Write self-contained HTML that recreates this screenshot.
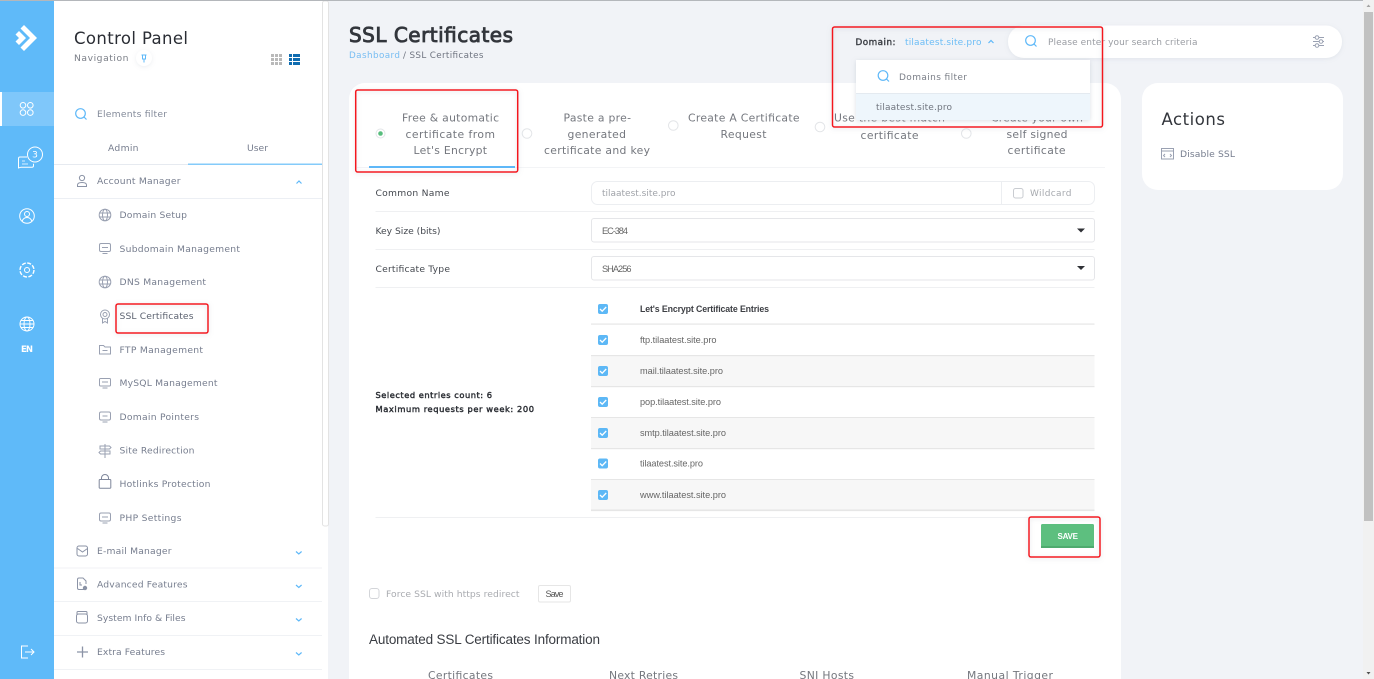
<!DOCTYPE html>
<html lang="en">
<head>
<meta charset="utf-8">
<title>SSL Certificates</title>
<style>
html,body{margin:0;padding:0;width:1374px;height:679px;overflow:hidden;background:#f1f3f7}
svg{display:block;position:absolute;left:0;top:0;filter:blur(.3px)}
text{font-family:"DejaVu Sans","Liberation Sans",sans-serif;white-space:pre}
.nav{font-size:9.2px;fill:#767d8e}
.sub{font-size:9.2px;fill:#767d8e}
.tab{font-size:10.8px;fill:#74777e}
.lab{font-size:9.2px;fill:#44484f}
.cell{font-family:"Liberation Sans",sans-serif;font-size:9.2px;fill:#666}
.semi{font-size:8.3px;fill:#2b2e34;stroke:#2b2e34;stroke-width:.42px}
.ic{fill:none;stroke:#9aa1b2;stroke-width:1}
.wh{fill:none;stroke:#fff;stroke-width:1}
.bl{fill:none;stroke:#5eb8f8;stroke-width:1.2}
.red{fill:none;stroke:#f4141e;stroke-width:1.5}
</style>
</head>
<body>
<svg width="1374" height="679" viewBox="0 0 1374 679" xmlns="http://www.w3.org/2000/svg">
<defs>
<filter id="sh" x="-20%" y="-20%" width="140%" height="140%"><feDropShadow dx="0" dy="1" stdDeviation="2.5" flood-color="#8a94a6" flood-opacity=".3"/></filter>
<filter id="sh2" x="-20%" y="-40%" width="140%" height="180%"><feDropShadow dx="0" dy="1" stdDeviation="2" flood-color="#8a94a6" flood-opacity=".16"/></filter>
</defs>

<!-- page -->
<rect width="1374" height="679" fill="#f1f3f7"/>

<!-- icon rail -->
<rect x="0" y="0" width="54" height="679" fill="#5fbaf9"/>
<rect x="0" y="92" width="54" height="34" fill="#7fc7fa"/>
<rect x="0" y="92" width="2" height="34" fill="#fff"/>
<g fill="#fff">
<path d="M24 25l13 13-13 13-3.500-3.500 9.500-9.500-9.500-9.500z"/>
<path d="M19 31l7 7-7 7-3.500-3.500 3.500-3.500-3.500-3.500z"/>
</g>
<g class="wh">
<circle cx="23" cy="105.300" r="2.800"/><circle cx="30.300" cy="105.300" r="2.800"/><circle cx="23" cy="112.600" r="2.800"/><circle cx="30.300" cy="112.600" r="2.800"/>
<path d="M27 157h-7a1.500 1.500 0 0 0-1.500 1.500v9.500l2.500-.8h11a1.500 1.500 0 0 0 1.500-1.500v-2"/>
<path d="M22 161h3M22 164h6" stroke-width=".8"/>
<circle cx="35" cy="154.500" r="7.500" fill="#5fbaf9"/>
<circle cx="27" cy="216" r="7.300"/><circle cx="27" cy="214" r="2.500"/><path d="M22 221.500c1-3 2.500-4 5-4s4 1 5 4"/>
<circle cx="27" cy="270" r="7" stroke-width="1.400" stroke-dasharray="4 1.500"/><circle cx="27" cy="270" r="2.500"/>
<circle cx="27" cy="324" r="7"/><ellipse cx="27" cy="324" rx="3" ry="7"/><path d="M20 324h14M21 320.500h12M21 327.500h12"/>
<path d="M28 646h-6.500v12H28M25 652h9M31 649l3 3-3 3"/>
</g>
<text x="35" y="157.500" font-size="9" fill="#fff" text-anchor="middle">3</text>
<text x="21" y="352" font-size="8.500" font-weight="bold" fill="#fff" textLength="12">EN</text>

<!-- sidebar -->
<rect x="54" y="0" width="274" height="679" fill="#fff"/>
<rect x="322.500" y="1" width="6" height="525" rx="2" fill="#fff" stroke="#e3e3e3" stroke-width="1"/>
<rect x="329" y="0" width="1020" height="679" fill="#f1f3f7"/>
<text x="74" y="44" font-size="16.500" fill="#2a2d34" textLength="114">Control Panel</text>
<text x="74" y="61" font-size="9.200" fill="#7b7f88" textLength="54.500">Navigation</text>
<circle cx="144" cy="58" r="8" fill="#fff" filter="url(#sh2)"/>
<path d="M141.500 55h5M142.500 55v4h3v-4M144 59v3.500" fill="none" stroke="#5eb8f8" stroke-width="1"/>
<g fill="#b9b9b9">
<rect x="271" y="54" width="3" height="3"/><rect x="275" y="54" width="3" height="3"/><rect x="279" y="54" width="3" height="3"/>
<rect x="271" y="58" width="3" height="3"/><rect x="275" y="58" width="3" height="3"/><rect x="279" y="58" width="3" height="3"/>
<rect x="271" y="62" width="3" height="3"/><rect x="275" y="62" width="3" height="3"/><rect x="279" y="62" width="3" height="3"/>
</g>
<g fill="#0f6cb0">
<rect x="289" y="54" width="3" height="3"/><rect x="293" y="54" width="7" height="3"/>
<rect x="289" y="58" width="3" height="3"/><rect x="293" y="58" width="7" height="3"/>
<rect x="289" y="62" width="3" height="3"/><rect x="293" y="62" width="7" height="3"/>
</g>
<circle cx="80.500" cy="113.500" r="4.800" class="bl"/><path d="M84 117l2.500 2.500" class="bl"/>
<text x="97" y="117" class="nav" fill-opacity=".9" textLength="70">Elements filter</text>
<text x="108" y="151" class="nav" textLength="30.500">Admin</text>
<text x="247" y="151" class="nav" textLength="21">User</text>
<rect x="54" y="164" width="134" height="1" fill="#e6eaf0"/>
<rect x="188" y="163.500" width="134" height="1.500" fill="#84cbfa"/>

<text x="97" y="184" class="nav" textLength="83.500">Account Manager</text>
<g class="ic" style="stroke:#8b93a6"><circle cx="82" cy="178" r="2.600"/><path d="M77.500 186.500v-1.500c0-1.500 1.500-2.500 4.500-2.500s4.500 1 4.500 2.500v1.500z"/></g>
<path d="M296.500 183.500l2.500-2.500 2.500 2.500" class="bl"/>
<rect x="54" y="198" width="268" height="1" fill="#eceff4"/>

<!-- sub item icons -->
<g class="ic" stroke-width=".9">
<circle cx="105" cy="215" r="5.800"/><ellipse cx="105" cy="215" rx="2.500" ry="5.800"/><path d="M99 213h12M99 217h12"/>
<rect x="99.500" y="243.500" width="11" height="8" rx="1.500"/><path d="M102.500 253.500h5M102 247.500h6"/>
<circle cx="105" cy="282" r="5.800"/><ellipse cx="105" cy="282" rx="2.500" ry="5.800"/><path d="M99.500 280h11M99.500 284h11"/>
<circle cx="105" cy="314.500" r="4.500"/><circle cx="105" cy="314.500" r="2"/><path d="M102.500 318.500v4.500l2.500-1.500 2.500 1.500v-4.500"/>
<path d="M99.500 345.500h4l1.500 1.500h5.500v7h-11z"/><path d="M102.500 350.500h5"/>
<rect x="99.500" y="378.500" width="11" height="7.500" rx="1"/><path d="M102.500 388h5M102 382h6"/>
<rect x="99.500" y="412" width="11" height="8" rx="1.500"/><path d="M102.500 422h5M102.500 416h5"/>
<path d="M105 444v14M100 446h9.500l1.500 1.500-1.500 1.500H100zM110 451h-9.500L99 452.500l1.500 1.500H110z"/>
<path d="M100 479.500h10a.8.800 0 0 1 .8.800v7.200a.8.800 0 0 1-.8.800h-10a.8.800 0 0 1-.8-.8v-7.200a.8.800 0 0 1 .8-.8zM101.500 479.500v-1.500a3.500 3.500 0 0 1 7 0v1.500" style="stroke:#7f879b"/>
<rect x="99.500" y="513" width="11" height="8" rx="1.500"/><path d="M102.500 523h5M102 517h6"/>
</g>

<text x="119.500" y="218" class="sub" textLength="67.500">Domain Setup</text>
<text x="119.500" y="252" class="sub" textLength="120.500">Subdomain Management</text>
<text x="119.500" y="285" class="sub" textLength="86.500">DNS Management</text>
<text x="119.500" y="319" class="sub" style="fill:#5c6270" textLength="74">SSL Certificates</text>
<text x="119.500" y="353" class="sub" textLength="83.500">FTP Management</text>
<text x="119.500" y="386" class="sub" textLength="98">MySQL Management</text>
<text x="119.500" y="420" class="sub" textLength="79.500">Domain Pointers</text>
<text x="119.500" y="453.500" class="sub" textLength="75">Site Redirection</text>
<text x="119.500" y="487" class="sub" textLength="91">Hotlinks Protection</text>
<text x="119.500" y="521" class="sub" textLength="62">PHP Settings</text>

<g class="ic" style="stroke:#8b93a6">
<rect x="77" y="546" width="10.500" height="10" rx="2"/><path d="M77.500 548.500l5 3.500 5-3.500"/>
<path d="M84 589.500h-5a1.500 1.500 0 0 1-1.500-1.500v-8.500a1.500 1.500 0 0 1 1.500-1.500h4l3 3v3"/><circle cx="85" cy="588" r="1.700" fill="#8b93a6"/><path d="M80 582v3h2"/>
<path d="M77 615v-2.500a1 1 0 0 1 1-1h8a1 1 0 0 1 1 1V615"/><rect x="76.500" y="614" width="11" height="9" rx="2"/>
<path d="M77 652h11M82.500 646.500v11" stroke-width="1.300"/>
</g>
<text x="97" y="554" class="nav" textLength="74.500">E-mail Manager</text>
<text x="97" y="587.500" class="nav" textLength="90.500">Advanced Features</text>
<text x="97" y="621" class="nav" textLength="88.500">System Info &amp; Files</text>
<text x="97" y="655" class="nav" textLength="68">Extra Features</text>
<g class="bl">
<path d="M296 551.500l2.800 2.500 2.800-2.500"/>
<path d="M296 585l2.800 2.500 2.800-2.500"/>
<path d="M296 618.500l2.800 2.500 2.800-2.500"/>
<path d="M296 652.500l2.800 2.500 2.800-2.500"/>
</g>
<rect x="54" y="567.500" width="268" height="1" fill="#f0f2f5"/>
<rect x="54" y="601" width="268" height="1" fill="#f0f2f5"/>
<rect x="54" y="635" width="268" height="1" fill="#f0f2f5"/>
<rect x="54" y="669" width="268" height="1" fill="#f0f2f5"/>

<!-- heading -->
<text x="349" y="42" style="font-size:20px;stroke:#33363c;stroke-width:.85px" fill="#33363c" textLength="164">SSL Certificates</text>
<text x="349" y="58" font-size="8.800" fill="#78bdf2" textLength="51">Dashboard</text>
<text x="403" y="58" font-size="8.800" fill="#6f7480" textLength="80.500">/ SSL Certificates</text>

<!-- main card -->
<rect x="349" y="83" width="772" height="620" rx="16" fill="#fff"/>
<!-- actions -->
<rect x="1142" y="83" width="201" height="107" rx="16" fill="#fff"/>
<text x="1161.500" y="125" font-size="16.500" fill="#33363c" textLength="63.500">Actions</text>
<g class="ic"><rect x="1161.500" y="148.500" width="12" height="10.500"/><path d="M1161.500 151h12M1165 154l-1.500 1.500 1.500 1.500M1170 154l1.500 1.500-1.500 1.500"/></g>
<text x="1180" y="157" class="nav" textLength="55">Disable SSL</text>

<!-- tabs -->
<rect x="357" y="167" width="748" height="1" fill="#f3f4f6"/>
<rect x="369" y="166" width="146" height="2" fill="#5eb8f8"/>
<g fill="#fff" stroke="#e3e5e8" stroke-width="1">
<circle cx="380.500" cy="133.500" r="4.500"/>
<circle cx="527" cy="133.500" r="4.800"/>
<circle cx="673.300" cy="125.500" r="4.800"/>
<circle cx="820" cy="127" r="4.800"/>
<circle cx="966.300" cy="133.500" r="4.800"/>
</g>
<circle cx="380.500" cy="133.500" r="2.300" fill="#58bd7d"/>

<text x="402" y="121.500" class="tab" textLength="97">Free &amp; automatic</text>
<text x="405.500" y="138" class="tab" textLength="89.500">certificate from</text>
<text x="413.500" y="154" class="tab" textLength="73.500">Let's Encrypt</text>
<text x="563.500" y="121.500" class="tab" textLength="67.500">Paste a pre-</text>
<text x="567.500" y="138" class="tab" textLength="58.500">generated</text>
<text x="544" y="154" class="tab" textLength="106">certificate and key</text>
<text x="688" y="121.500" class="tab" textLength="111.500">Create A Certificate</text>
<text x="720.500" y="138" class="tab" textLength="46">Request</text>
<text x="834" y="121.500" class="tab" textLength="111">Use the best match</text>
<text x="860.500" y="139" class="tab" textLength="58">certificate</text>
<text x="991" y="121.500" class="tab" textLength="92">Create your own</text>
<text x="1006.500" y="138" class="tab" textLength="61">self signed</text>
<text x="1007.500" y="154" class="tab" textLength="58">certificate</text>

<!-- form -->
<text x="375.500" y="196" class="lab" textLength="74">Common Name</text>
<rect x="591.500" y="181.500" width="503" height="23" rx="6" fill="#fff" stroke="#eceef1"/>
<rect x="1001" y="182" width="1" height="22" fill="#eceef1"/>
<text x="602" y="196" font-size="9" fill="#a0a3a9" textLength="73.500">tilaatest.site.pro</text>
<rect x="1013.500" y="188.500" width="9.500" height="9.500" rx="2" fill="#fff" stroke="#c9ccd1"/>
<text x="1030" y="196" font-size="9" fill="#a6a9ae" textLength="41.500">Wildcard</text>
<rect x="375.500" y="211" width="719" height="1" fill="#eff0f2"/>

<text x="375.500" y="234" class="lab" textLength="65">Key Size (bits)</text>
<rect x="591.500" y="218.500" width="503" height="23.500" rx="2.500" fill="#fff" stroke="#e5e6e9"/>
<text x="602" y="234" class="cell" textLength="26">EC-384</text>
<path d="M1077 228.500h8l-4 4z" fill="#2f3136"/>
<rect x="375.500" y="249" width="719" height="1" fill="#eff0f2"/>

<text x="375.500" y="272" class="lab" textLength="74.500">Certificate Type</text>
<rect x="591.500" y="256.500" width="503" height="23.500" rx="2.500" fill="#fff" stroke="#e5e6e9"/>
<text x="602" y="272" class="cell" textLength="29.500">SHA256</text>
<path d="M1077 266h8l-4 4z" fill="#2f3136"/>
<rect x="375.500" y="287" width="719" height="1" fill="#eff0f2"/>

<text x="375.500" y="398" class="semi" textLength="116.500">Selected entries count: 6</text>
<text x="375.500" y="412" class="semi" textLength="158.500">Maximum requests per week: 200</text>

<!-- table -->
<rect x="591" y="356" width="503.500" height="30" fill="#f7f7f7"/>
<rect x="591" y="418" width="503.500" height="30" fill="#f7f7f7"/>
<rect x="591" y="479.500" width="503.500" height="30" fill="#f7f7f7"/>
<g fill="#e6e6e6">
<rect x="591" y="323.500" width="503.500" height="1.200"/>
<rect x="591" y="355" width="503.500" height="1.200"/>
<rect x="591" y="386" width="503.500" height="1.200"/>
<rect x="591" y="417" width="503.500" height="1"/>
<rect x="591" y="448" width="503.500" height="1.200"/>
<rect x="591" y="479" width="503.500" height="1"/>
<rect x="591" y="509.500" width="503.500" height="1.600"/>
</g>
<g fill="#5db8f6">
<rect x="598" y="304" width="10" height="10" rx="2"/>
<rect x="598" y="335" width="10" height="10" rx="2"/>
<rect x="598" y="366" width="10" height="10" rx="2"/>
<rect x="598" y="397" width="10" height="10" rx="2"/>
<rect x="598" y="428" width="10" height="10" rx="2"/>
<rect x="598" y="458.500" width="10" height="10" rx="2"/>
<rect x="598" y="490" width="10" height="10" rx="2"/>
</g>
<g fill="none" stroke="#fff" stroke-width="1.300">
<path d="M600 309l2.200 2.200 4-4.200"/>
<path d="M600 340l2.200 2.200 4-4.200"/>
<path d="M600 371l2.200 2.200 4-4.200"/>
<path d="M600 402l2.200 2.200 4-4.200"/>
<path d="M600 433l2.200 2.200 4-4.200"/>
<path d="M600 463.500l2.200 2.200 4-4.200"/>
<path d="M600 495l2.200 2.200 4-4.200"/>
</g>
<text x="640" y="312" font-size="8.800" font-weight="bold" fill="#3d3f44" style="font-family:'Liberation Sans',sans-serif" textLength="129">Let's Encrypt Certificate Entries</text>
<text x="640" y="343" class="cell" textLength="76.500">ftp.tilaatest.site.pro</text>
<text x="640" y="374" class="cell" textLength="83">mail.tilaatest.site.pro</text>
<text x="640" y="405" class="cell" textLength="81">pop.tilaatest.site.pro</text>
<text x="640" y="436" class="cell" textLength="86">smtp.tilaatest.site.pro</text>
<text x="640" y="466.500" class="cell" textLength="63">tilaatest.site.pro</text>
<text x="640" y="498" class="cell" textLength="86">www.tilaatest.site.pro</text>
<rect x="375.500" y="517" width="719" height="1" fill="#eff0f2"/>

<rect x="1041" y="524" width="53" height="24" rx="1.500" fill="#5dbf7f"/>
<rect x="1041" y="546" width="53" height="2" fill="#4eab6e"/>
<text x="1057.500" y="539" font-size="8" font-weight="bold" fill="#fff" style="font-family:'Liberation Sans',sans-serif" textLength="20.500">SAVE</text>

<rect x="369.500" y="588.500" width="9.500" height="10" rx="2.500" fill="#fff" stroke="#d3d5d9"/>
<text x="386" y="597" font-size="9.200" fill="#a9abb0" textLength="133.500">Force SSL with https redirect</text>
<rect x="538.500" y="585.500" width="32" height="16.500" rx="1.500" fill="#fff" stroke="#e6e6e6"/>
<text x="545.500" y="597" class="cell" style="fill:#555" textLength="18">Save</text>

<text x="369" y="644" font-size="13.500" fill="#3a3d43" style="font-family:'Liberation Sans',sans-serif" textLength="231">Automated SSL Certificates Information</text>
<text x="428" y="679" class="tab" textLength="65">Certificates</text>
<text x="609" y="679" class="tab" textLength="69">Next Retries</text>
<text x="799.500" y="679" class="tab" textLength="54.500">SNI Hosts</text>
<text x="967" y="679" class="tab" textLength="86">Manual Trigger</text>

<!-- search bar -->
<rect x="1008" y="25.500" width="334" height="32.500" rx="16" fill="#fff" filter="url(#sh2)"/>
<circle cx="1030.500" cy="40.500" r="4.800" class="bl"/><path d="M1034 44l2.500 2.500" class="bl"/>
<text x="1048" y="45" font-size="9" fill="#9a9da3" textLength="149.500">Please enter your search criteria</text>
<g class="ic">
<path d="M1313 37.500h2M1319 37.500h5M1313 41.500h6M1323 41.500h1M1313 45.500h2M1319 45.500h5"/>
<circle cx="1317" cy="37.500" r="1.800"/><circle cx="1321" cy="41.500" r="1.800"/><circle cx="1317" cy="45.500" r="1.800"/>
</g>

<!-- domain selector -->
<text x="855.500" y="45" style="font-size:8.800px;stroke:#3f4248;stroke-width:.4px" fill="#3f4248" textLength="40">Domain:</text>
<text x="905" y="45" font-size="9" fill="#6cbdf6" textLength="76.500">tilaatest.site.pro</text>
<path d="M988.500 43l2.500-2.500 2.500 2.500" class="bl"/>
<g filter="url(#sh)">
<rect x="856" y="60" width="234" height="60" fill="#fff"/>
</g>
<rect x="856" y="93" width="234" height="27" fill="#eef6fc"/>
<rect x="856" y="93" width="234" height="1" fill="#e4eaf0"/>
<circle cx="883" cy="75.500" r="4.800" class="bl"/><path d="M886.500 79l2.500 2.500" class="bl"/>
<text x="899" y="80" font-size="9" fill="#7b7f88" textLength="68">Domains filter</text>
<text x="876" y="110" font-size="9" fill="#70757f" textLength="76">tilaatest.site.pro</text>

<!-- red annotation boxes -->
<g class="red" filter="url(#sh)">
<rect x="355.700" y="90" width="162" height="82" rx="2"/>
<rect x="832.500" y="27" width="270" height="100" rx="2"/>
<rect x="116" y="304" width="92" height="29" rx="2"/>
<rect x="1029" y="517" width="71" height="40" rx="2"/>
</g>

<!-- window scrollbar -->
<rect x="1363" y="0" width="11" height="679" fill="#f1f1f1"/>
<rect x="1364" y="12" width="9" height="509" fill="#c1c1c1"/>
<path d="M1366.500 7l2-2.500 2 2.500z" fill="#a3a3a3"/>
<path d="M1366.500 672l2 2.500 2-2.500z" fill="#505050"/>
<rect x="0" y="0" width="1363" height="1" fill="#b4b7bb"/>
</svg>
</body>
</html>
